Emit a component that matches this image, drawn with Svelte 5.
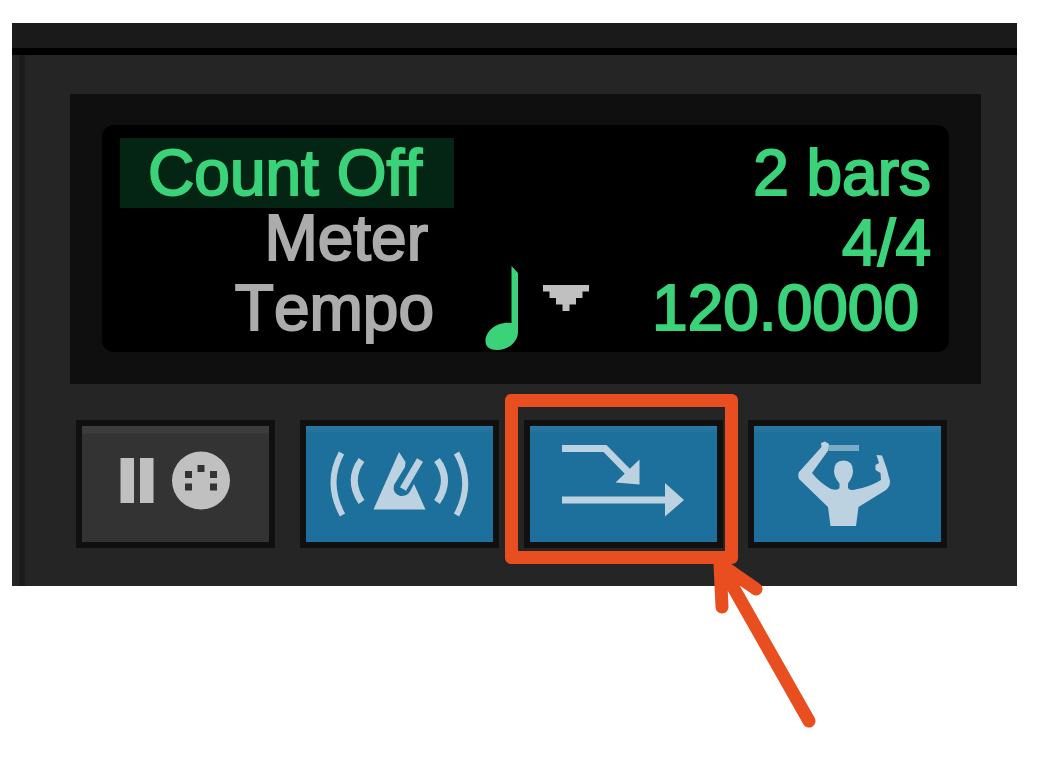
<script>
  let countOff = $state(true);
  let waitForNote = $state(false);
  let click = $state(true);
  let overdub = $state(true);
  let conductor = $state(true);
</script>

<main class="page">
  <section class="panel" aria-label="Transport">
    <div class="strip"></div>
    <div class="body">
      <div class="bezel">
        <div class="display">
          <div class="labels">
            <button class="count" class:lit={countOff} onclick={() => (countOff = !countOff)}>Count Off</button>
            <span class="meter">Meter</span>
            <span class="tempo">Tempo</span>
          </div>
          <button class="note" aria-label="Beat value">
            <svg width="110" height="86" viewBox="0 0 110 86" aria-hidden="true">
              <path fill="#3bd37a" d="M29.5 2 L36 9 V68 C36 78 26 86 15 86 C8 86 3.500 83 3.500 77 C3.500 67 15 57 29.500 59 Z" />
              <path fill="#c0c0c0" d="M61 21 H107 V27.500 H100.500 V34 H94 V40.500 H87.500 V47 H80.500 V40.500 H74 V34 H67.500 V27.500 H61 Z" />
            </svg>
          </button>
          <div class="values">
            <span>2 bars</span>
            <span>4/4</span>
            <span class="bpm">120.0000</span>
          </div>
        </div>
      </div>

      <div class="buttons">
        <div class="slot">
          <button class="tool" class:on={waitForNote} aria-label="Wait for Note" aria-pressed={waitForNote} onclick={() => (waitForNote = !waitForNote)}>
            <svg viewBox="0 0 187 116" aria-hidden="true">
              <path fill="#c0c0c0" d="M38.500 32 H52 V77 H38.500 Z M58 32 H71.500 V77 H58 Z" />
              <circle cx="119" cy="54.500" r="29" fill="#c0c0c0" />
              <path fill="#333" d="M103 45h7v7h-7z M115.500 39h7v7h-7z M128 45h7v7h-7z M103 57.500h7v7h-7z M128 57.500h7v7h-7z" />
            </svg>
          </button>
        </div>
        <div class="slot">
          <button class="tool" class:on={click} aria-label="Metronome" aria-pressed={click} onclick={() => (click = !click)}>
            <svg viewBox="0 0 187 116" aria-hidden="true">
              <g fill="none" stroke="#bdd2e1">
                <path stroke-width="6" d="M35.500 27 Q19 57 36.500 89 M150.500 27 Q168 57 150.500 89" />
                <path stroke-width="7" d="M55.500 34 Q41 54 55.500 76 M131 34 Q146 54 131 76" />
                <path stroke-width="7" d="M114 34 L97 63" />
              </g>
              <path fill="#bdd2e1" d="M93 26 L99.500 36 L99 41 L88 59 Q86 67 94 70 Q101 70.500 104 65.500 L108 58 L119.500 83.500 H67.500 Z" />
            </svg>
          </button>
        </div>
        <div class="slot">
          <button class="tool" class:on={overdub} aria-label="MIDI Merge" aria-pressed={overdub} onclick={() => (overdub = !overdub)}>
            <svg viewBox="0 0 187 116" aria-hidden="true">
              <path fill="none" stroke="#bdd2e1" stroke-width="7" d="M32 22.500 H75 L98 46 M32 74 H136" />
              <path fill="#bdd2e1" d="M109.500 33.500 V58.500 L85.500 56.500 Z M135 57 L154 74 L135 90.500 Z" />
            </svg>
          </button>
          <div class="frame"></div>
          <svg class="arrow" width="130" height="190" viewBox="700 550 130 190" aria-hidden="true">
            <path fill="none" stroke="#e84e20" stroke-width="13" stroke-linecap="round" stroke-linejoin="round" d="M809 721 L720 564 L722 607 M720 564 L756 589" />
          </svg>
        </div>
        <div class="slot">
          <button class="tool" class:on={conductor} aria-label="Conductor" aria-pressed={conductor} onclick={() => (conductor = !conductor)}>
            <svg viewBox="0 0 187 116" aria-hidden="true">
              <path stroke="#bdd2e1" stroke-opacity="0.6" stroke-width="6" d="M75 22 H105" />
              <path fill="#bdd2e1" d="M71 15.500 L75 18 L74.500 24 L58 47 Q66 57 77 63 Q84 65 85.500 62 V57.500 Q80 51 80 45 Q80 34.500 89.500 34.500 Q99 34.500 99 45 Q99 51 94 57.500 V62 Q95 64.500 99 64 Q115 61.500 127 54 L126.500 47 L121.500 44 V39 L125 37 L122.500 29 L128 29.500 L132.500 42 L136 55 Q136 61 132 64 L104.500 81 L102 100 H76.500 L74 81 L45 53 Q43.500 49 45 46 L67.500 21 L67 17 Z" />
            </svg>
          </button>
        </div>
      </div>
    </div>
  </section>
</main>

<style>
  :global(body) {
    margin: 0;
    background: #fff;
  }
  .page {
    padding: 23px 25px 180px 12px;
    font-family: "Liberation Sans", Arial, sans-serif;
  }
  .panel {
    background: #252525;
  }
  .strip {
    height: 25px;
    background: #1a1a1a;
    border-bottom: 7px solid #000;
  }
  .body {
    padding: 39px 36px 38px 58px;
    background: linear-gradient(#1c1c1c, #1c1c1c) 7px 0 / 6px 100% no-repeat;
  }
  .bezel {
    padding: 31px 32px 32px;
    background: #0f0f0f;
  }
  .display {
    display: grid;
    grid-template-columns: 334px auto 1fr;
    padding: 13px 18px 2px 18px;
    border-radius: 12px;
    background: #000;
    font-size: 64px;
    font-kerning: none;
    color: #3bd37a;
    white-space: nowrap;
    -webkit-text-stroke: 2px currentColor;
  }
  button {
    padding: 0;
    border: 0;
    background: none;
    color: inherit;
    font: inherit;
    font-kerning: inherit;
    cursor: pointer;
  }
  svg {
    display: block;
  }
  .labels,
  .values {
    display: flex;
    flex-direction: column;
    text-align: right;
  }
  .labels {
    padding-bottom: 2px;
    color: #acacac;
  }
  .count {
    padding-right: 32px;
    line-height: 70px;
    text-align: right;
  }
  .count.lit {
    background: #042513;
    color: #3bd37a;
  }
  .meter {
    padding-right: 26px;
    line-height: 60px;
  }
  .tempo {
    padding-right: 20px;
    line-height: 80px;
  }
  .note {
    align-self: end;
    margin-left: 28px;
  }
  .values {
    line-height: 70px;
  }
  .values .bpm {
    padding-right: 12px;
    line-height: 60px;
  }
  .buttons {
    display: grid;
    grid-template-columns: repeat(4, 1fr);
    gap: 25px;
    margin: 36px 34px 0 6px;
  }
  .slot {
    position: relative;
  }
  .tool {
    display: block;
    box-sizing: border-box;
    width: 100%;
    border: 6px solid #101010;
    background: linear-gradient(#3c3c3c 7px, #333 8px);
  }
  .tool.on {
    background: linear-gradient(#2c78a3, #1d709b 8px);
  }
  .tool svg {
    width: 100%;
  }
  .frame {
    position: absolute;
    inset: -26px -15px -16px -19px;
    border: 13px solid #e84e20;
    border-radius: 6px;
    pointer-events: none;
  }
  .arrow {
    position: absolute;
    top: 130px;
    right: -107px;
    z-index: 1;
    pointer-events: none;
  }
</style>
